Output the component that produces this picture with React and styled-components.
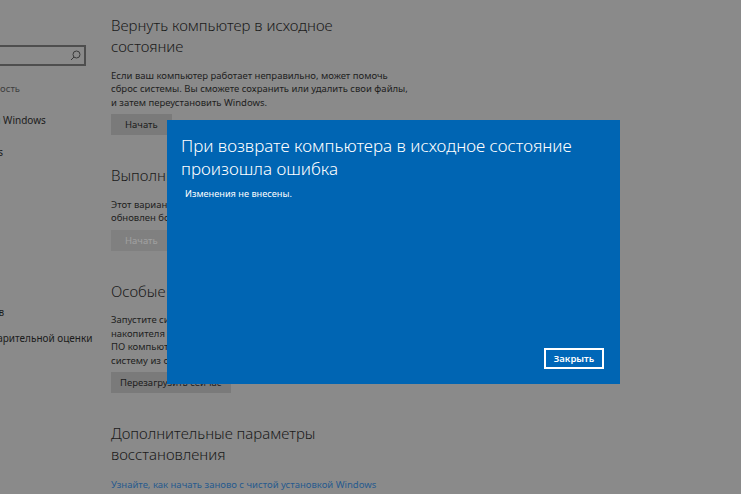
import React from "react";
import styled, { createGlobalStyle } from "styled-components";

const GlobalStyle = createGlobalStyle`
  html, body {
    margin: 0;
    padding: 0;
  }
  body {
    background: #8a8a8a;
    font-family: "Noto Sans", "Open Sans", sans-serif;
    overflow: hidden;
  }
`;

const Screen = styled.div`
  position: relative;
  width: 741px;
  height: 494px;
  overflow: hidden;
  display: flex;
  background: #8a8a8a;
  color: #1c1c1c;
`;

// left navigation, mostly scrolled out of view
const Nav = styled.nav`
  flex: 0 0 auto;
  width: 197px;
  min-width: 0;
  margin-left: -111px;
  padding-top: 45px;
  display: flex;
  flex-direction: column;
`;

const Search = styled.div`
  height: 21px;
  border: 2px solid #4e4e4e;
  box-sizing: border-box;
  display: flex;
  align-items: center;
  justify-content: flex-end;
  padding-right: 3px;
`;

const NavHeader = styled.div`
  margin-top: 16px;
  font-size: 9.5px;
  line-height: 14px;
  color: #3e3e3e;
  white-space: nowrap;
`;

const NavList = styled.ul`
  list-style: none;
  margin: 17px 0 0;
  padding: 0;
  display: flex;
  flex-direction: column;
`;

const NavItem = styled.li`
  height: ${(p) => p.$h || 32}px;
  padding-left: 20px;
  line-height: 14px;
  font-size: 10px;
  white-space: nowrap;
`;

const Main = styled.main`
  flex: 1;
  padding-left: 25px;
  padding-top: 15px;
`;

const Section = styled.section`
  margin-bottom: 30px;
`;

const Heading = styled.h2`
  margin: 0;
  font-size: 15px;
  font-weight: 300;
  line-height: 21px;
  color: #1a1a1a;
`;

const Text = styled.p`
  margin: 11.5px 0 0;
  font-size: 9.5px;
  line-height: 13.5px;
  color: #1e1e1e;
  white-space: nowrap;
`;

const Button = styled.button`
  display: block;
  margin-top: 5px;
  height: 21px;
  padding: 0 ${(p) => p.$pad || 14}px;
  min-width: 59px;
  border: none;
  background: ${(p) => (p.disabled ? "#808080" : "#7a7a7a")};
  color: ${(p) => (p.disabled ? "#a0a0a0" : "#1c1c1c")};
  font-family: inherit;
  font-size: 9.5px;
`;

const Link = styled.a`
  display: block;
  margin-top: 12.5px;
  font-size: 9.5px;
  line-height: 13.5px;
  color: #275a8e;
  text-decoration: none;
  white-space: nowrap;
`;

const Dialog = styled.div`
  position: absolute;
  left: 167px;
  top: 120px;
  width: 453px;
  height: 264px;
  box-sizing: border-box;
  background: #0065b3;
  color: #fff;
  padding: 13.5px 16px 15px 14px;
  display: flex;
  flex-direction: column;
`;

const DialogTitle = styled.h1`
  margin: 0;
  font-size: 17px;
  font-weight: 300;
  line-height: 23px;
`;

const DialogText = styled.p`
  margin: 7.5px 0 0 4px;
  font-size: 9.2px;
  line-height: 13px;
`;

const CloseButton = styled.button`
  margin-top: auto;
  align-self: flex-end;
  width: 60px;
  height: 21px;
  border: 2px solid #fff;
  background: #0067b8;
  color: #fff;
  font-family: inherit;
  font-size: 9.5px;
  font-weight: 600;
  padding: 0;
`;

const SearchIcon = () => (
  <svg width="11" height="11" viewBox="0 0 11 11" fill="none" stroke="#3a3a3a" strokeWidth="1">
    <circle cx="6.5" cy="4.5" r="3.5" />
    <path d="M4 7L1 10" />
  </svg>
);

export default function App() {
  return (
    <>
      <GlobalStyle />
      <Screen>
        <Nav>
          <Search>
            <SearchIcon />
          </Search>
          <NavHeader>Обновление и безопасность</NavHeader>
          <NavList>
            <NavItem>Центр обновления Windows</NavItem>
            <NavItem>Защитник Windows</NavItem>
            <NavItem>Архивация</NavItem>
            <NavItem>Восстановление</NavItem>
            <NavItem>Активация</NavItem>
            <NavItem>Поиск устройства</NavItem>
            <NavItem $h={26}>Для разработчиков</NavItem>
            <NavItem>Программа предварительной оценки</NavItem>
          </NavList>
        </Nav>
        <Main>
          <Section>
            <Heading>
              Вернуть компьютер в исходное
              <br />
              состояние
            </Heading>
            <Text>
              Если ваш компьютер работает неправильно, может помочь
              <br />
              сброс системы. Вы сможете сохранить или удалить свои файлы,
              <br />и затем переустановить Windows.
            </Text>
            <Button>Начать</Button>
          </Section>
          <Section>
            <Heading>Выполнить откат к предыдущей версии Windows 10</Heading>
            <Text>
              Этот вариант больше недоступен, так как компьютер был
              <br />
              обновлен более 10 дней назад.
            </Text>
            <Button disabled>Начать</Button>
          </Section>
          <Section>
            <Heading>Особые варианты загрузки</Heading>
            <Text>
              Запустите систему с устройства или диска (например, USB-
              <br />
              накопителя или DVD-диска), измените параметры встроенного
              <br />
              ПО компьютера или параметры запуска Windows либо восстановите
              <br />
              систему из образа.
            </Text>
            <Button $pad={9}>Перезагрузить сейчас</Button>
          </Section>
          <Section>
            <Heading>
              Дополнительные параметры
              <br />
              восстановления
            </Heading>
            <Link href="#">Узнайте, как начать заново с чистой установкой Windows</Link>
          </Section>
        </Main>
        <Dialog role="dialog">
          <DialogTitle>
            При возврате компьютера в исходное состояние
            <br />
            произошла ошибка
          </DialogTitle>
          <DialogText>Изменения не внесены.</DialogText>
          <CloseButton>Закрыть</CloseButton>
        </Dialog>
      </Screen>
    </>
  );
}
